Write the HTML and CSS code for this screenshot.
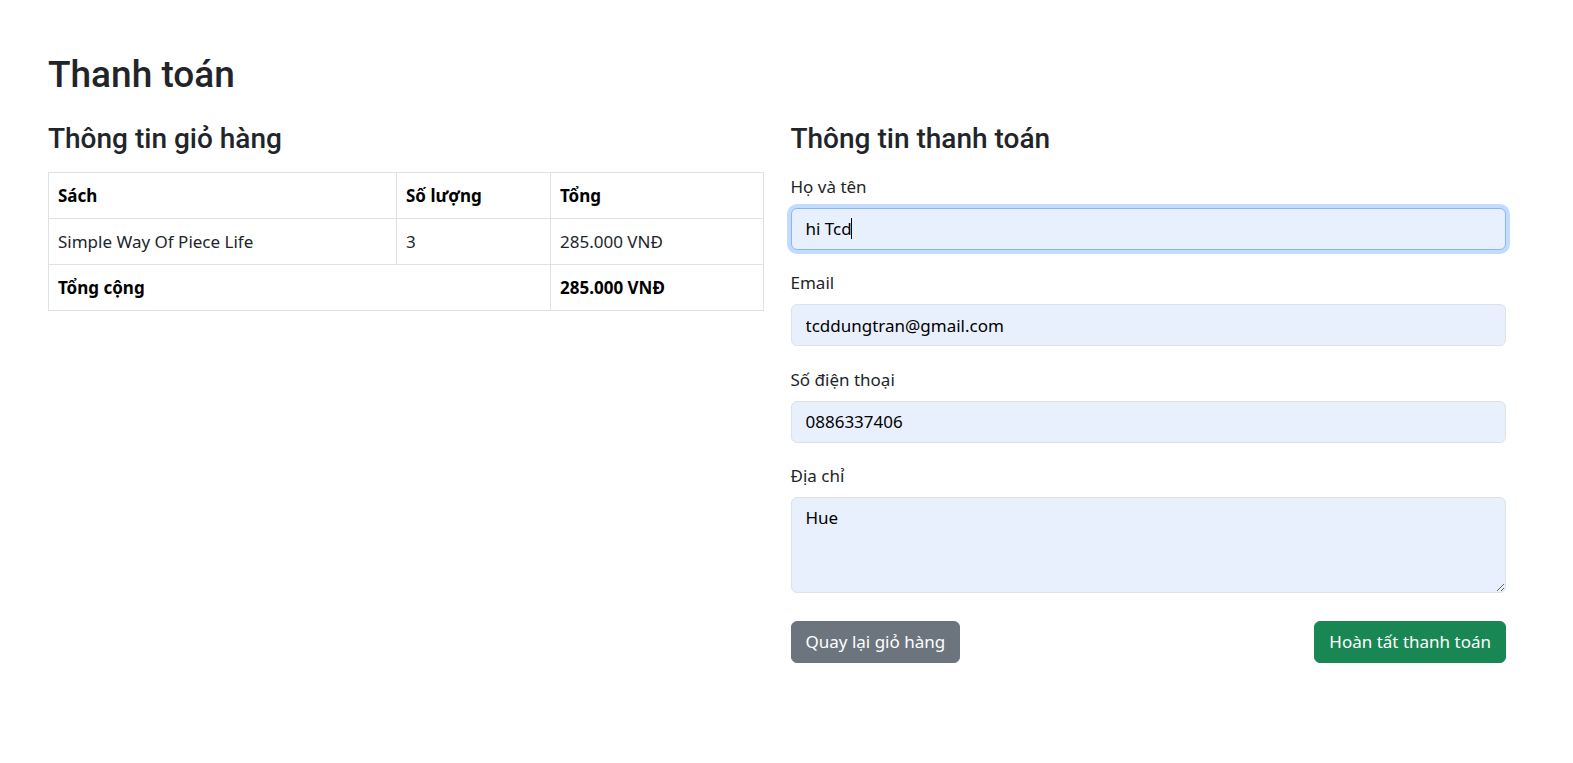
FILE: index.html
```html
<!DOCTYPE html>
<html lang="vi">
<head>
<meta charset="utf-8">
<title>Thanh toán</title>
<link rel="stylesheet" href="styles.css">
</head>
<body>
<div class="page">
  <h1 class="title">Thanh toán</h1>
  <div class="cols">
    <section class="col">
      <h3 class="sub sub-cart">Thông tin giỏ hàng</h3>
      <table class="cart">
        <colgroup>
          <col class="c-book">
          <col class="c-qty">
          <col class="c-total">
        </colgroup>
        <thead>
          <tr><th>Sách</th><th>Số lượng</th><th>Tổng</th></tr>
        </thead>
        <tbody>
          <tr><td>Simple Way Of Piece Life</td><td>3</td><td>285.000 VNĐ</td></tr>
        </tbody>
        <tfoot>
          <tr><th colspan="2">Tổng cộng</th><th>285.000 VNĐ</th></tr>
        </tfoot>
      </table>
    </section>
    <section class="col">
      <h3 class="sub">Thông tin thanh toán</h3>
      <form class="form">
        <div class="group">
          <label class="label" for="name">Họ và tên</label>
          <div class="field-wrap">
            <input class="control control-focus" id="name" type="text" value="hi Tcd">
            <span class="caret"></span>
          </div>
        </div>
        <div class="group">
          <label class="label" for="email">Email</label>
          <input class="control" id="email" type="email" value="tcddungtran@gmail.com">
        </div>
        <div class="group">
          <label class="label" for="phone">Số điện thoại</label>
          <input class="control" id="phone" type="text" value="0886337406">
        </div>
        <div class="group">
          <label class="label" for="addr">Địa chỉ</label>
          <textarea class="control area" id="addr">Hue</textarea>
        </div>
        <div class="actions">
          <button type="button" class="btn btn-secondary">Quay lại giỏ hàng</button>
          <button type="button" class="btn btn-success">Hoàn tất thanh toán</button>
        </div>
      </form>
    </section>
  </div>
</div>
</body>
</html>
```

FILE: styles.css
```css
* { box-sizing: border-box; }
html, body { margin: 0; padding: 0; background: #fff; }
body {
  font-family: "Segoe UI", "Noto Sans", "Open Sans", sans-serif;
  font-size: 17px;
  line-height: 1.5;
  color: #212529;
}
.page {
  padding: 48px 0 0 48px;
  width: 1506px;
}
.title {
  margin: 3px 0 8px;
  font-family: "Segoe UI", Roboto, "Noto Sans", sans-serif;
  font-size: 37px;
  line-height: 48px;
  font-weight: 500;
}
.cols {
  display: flex;
  gap: 27px;
  margin-top: 23px;
}
.col { flex: 1 1 0; min-width: 0; }
.sub {
  margin: 0 0 16px;
  font-family: "Segoe UI", Roboto, "Noto Sans", sans-serif;
  font-size: 28px;
  line-height: 33.6px;
  font-weight: 500;
}
.cart {
  width: 100%;
  border-collapse: collapse;
  table-layout: fixed;
}
.c-book { width: 348px; }
.c-qty { width: 154px; }
.cart th, .cart td {
  border: 1px solid #dee2e6;
  padding: 10px 9px;
  line-height: 25px;
  text-align: left;
  vertical-align: top;
}
.cart th { font-weight: 700; color: #000; }
.cart td { font-weight: 400; color: #212529; }
.form { padding-top: 3px; }
.group { margin-bottom: 21.5px; }
.label {
  display: block;
  line-height: 24px;
  margin-bottom: 9px;
}
.field-wrap { position: relative; }
.control {
  display: block;
  width: 100%;
  height: 42px;
  padding: 0 14px;
  font: inherit;
  color: #000;
  background: #e8f0fe;
  border: 1px solid #dee2e6;
  border-radius: 6px;
  outline: none;
}
.control-focus {
  border-color: #86b7fe;
  box-shadow: 0 0 0 4px rgba(13, 110, 253, 0.25);
}
.caret {
  position: absolute;
  left: 60px;
  top: 10px;
  width: 1px;
  height: 21px;
  background: #000;
}
.area {
  height: 96px;
  padding: 8px 14px;
  line-height: 24px;
  resize: vertical;
}
.actions {
  display: flex;
  justify-content: space-between;
  margin-top: 27.5px;
}
.btn {
  height: 42px;
  padding: 0 14px;
  font: inherit;
  color: #fff;
  border: 1px solid transparent;
  border-radius: 6px;
  cursor: pointer;
}
.btn-secondary { background: #6c757d; border-color: #6c757d; }
.btn-success { background: #198754; border-color: #198754; }
```
